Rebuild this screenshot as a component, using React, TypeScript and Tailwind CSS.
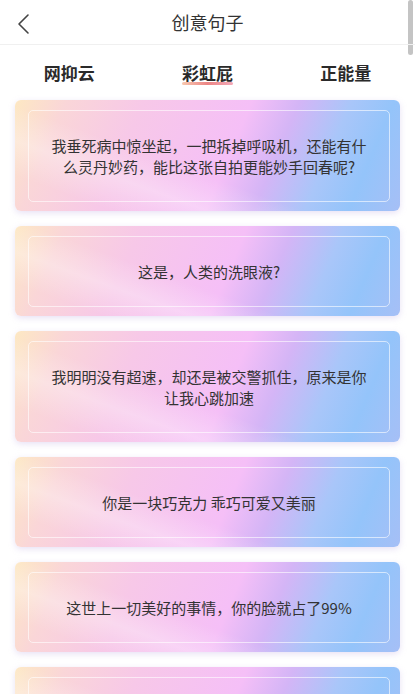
import { FiChevronLeft } from 'react-icons/fi';

const tabs = ['网抑云', '彩虹屁', '正能量'];

const sentences = [
    '我垂死病中惊坐起，一把拆掉呼吸机，还能有什么灵丹妙药，能比这张自拍更能妙手回春呢?',
    '这是，人类的洗眼液?',
    '我明明没有超速，却还是被交警抓住，原来是你让我心跳加速',
    '你是一块巧克力 乖巧可爱又美丽',
    '这世上一切美好的事情，你的脸就占了99%',
    '你笑起来真好看，像春天的花一样',
];

export default function App() {
    return (
        <div
            className="relative h-[694px] w-full overflow-hidden bg-white text-[#333]"
            style={{ fontFamily: '"Noto Sans CJK SC", "Noto Sans", sans-serif' }}
        >
            {/* scroll indicator */}
            <div className="absolute right-[2px] top-0 h-[55px] w-[5px] rounded-full bg-[#c4c4c4]" />

            {/* Header */}
            <div className="relative flex h-[45px] items-center justify-center border-b border-[#f0f0f0]">
                <button className="absolute left-[11px] top-[12px] text-[#444]">
                    <svg width="24" height="24" viewBox="0 0 24 24" fill="none" stroke="currentColor" strokeWidth="1.6" strokeLinecap="round" strokeLinejoin="round">
                        <path d="M17 3 L8 12 L17 21" />
                    </svg>
                </button>
                <h1 className="text-[18px] font-normal leading-none text-[#333]">创意句子</h1>
            </div>

            {/* Tabs */}
            <div className="grid h-[55px] grid-cols-3 items-center">
                {tabs.map((t, i) => (
                    <div key={t} className="flex justify-center">
                        <span className="relative text-[17px] font-bold leading-none text-[#2a2a2a]">
                            {t}
                            {i === 1 && (
                                <span className="absolute -bottom-[4px] left-0 h-[3px] w-full rounded-full bg-[linear-gradient(90deg,#f8c9b0,#ec8585,#f3a9b8)]" />
                            )}
                        </span>
                    </div>
                ))}
            </div>

            {/* Cards */}
            <div className="flex flex-col gap-[15px] px-[15px]">
                {sentences.map((s, i) => (
                    <div
                        key={i}
                        className="relative overflow-hidden rounded-[6px] pb-[9px] pl-[13px] pr-[10px] pt-[10px] shadow-[0_2px_6px_rgba(190,170,225,0.35)] bg-[linear-gradient(113deg,#fde8c3_0%,#fad6d8_12%,#f7c8e8_30%,#f5bff7_55%,#d4b5f6_66%,#a9c6f9_78%,#94c4fa_88%,#a6bff6_100%)]"
                    >
                        <div className="pointer-events-none absolute inset-0 bg-[linear-gradient(200deg,rgba(255,255,255,0)_58%,rgba(255,255,255,0.3)_72%,rgba(255,255,255,0)_86%)]" />
                        <div className="relative flex items-center justify-center rounded-[5px] border border-white/60 px-[20px] py-[24px] text-center text-[15px] leading-[21px] text-[#333]">
                            {s}
                        </div>
                    </div>
                ))}
            </div>
        </div>
    );
}
